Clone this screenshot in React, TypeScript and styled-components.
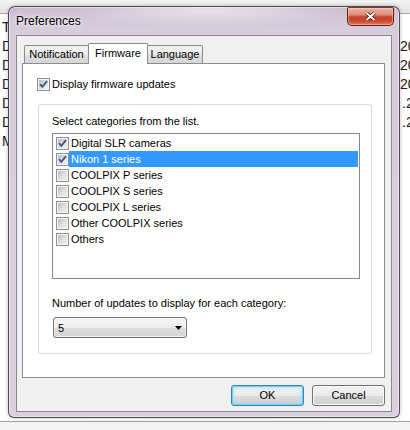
import React from 'react';
import styled, { createGlobalStyle } from 'styled-components';

const GlobalStyle = createGlobalStyle`
  html, body { margin: 0; padding: 0; background: #fff; }
  body { font-family: "Liberation Sans", Arial, sans-serif; }
  * { box-sizing: border-box; }
`;

const Screen = styled.div`
  position: relative;
  width: 410px;
  height: 430px;
  overflow: hidden;
  background: #fff;
  display: flex;
  flex-direction: column;
`;

const BgToolbar = styled.div`
  flex: none;
  height: 14px;
  background: linear-gradient(#f4f4f4, #e3e3e3);
  border-bottom: 1px solid #a7a7a7;
`;

const BgList = styled.div`
  flex: 1;
  padding-top: 3px;
  font: 14px "Liberation Sans", Arial, sans-serif;
  color: #1a1a1a;
`;

const BgRow = styled.div<{ $h: number }>`
  display: flex;
  height: ${(p) => p.$h}px;
  line-height: ${(p) => p.$h}px;
  white-space: nowrap;
`;

const BgLeft = styled.span`
  flex: 1;
  padding-left: 2px;
`;

const BgRight = styled.span<{ $shift: number }>`
  flex: none;
  width: 10px;
  overflow: hidden;
  padding-left: ${(p) => p.$shift}px;
`;

const BgStatus = styled.div`
  flex: none;
  height: 9px;
  border-top: 1px solid #a0a0a0;
  background: #f3f3f3;
`;

const Dialog = styled.div`
  position: absolute;
  left: 8px;
  top: 6px;
  width: 392px;
  height: 412px;
  display: flex;
  flex-direction: column;
  border: 1px solid rgba(45, 40, 48, 0.8);
  border-radius: 7px 7px 6px 6px;
  background:
    radial-gradient(ellipse 140px 16px at 200px 3px, rgba(255, 255, 255, 0.55), rgba(255, 255, 255, 0) 100%),
    linear-gradient(180deg, #c9bccd 0px, #d5c9d8 14px, #d9cedc 30px, #dad0dd 100%);
  box-shadow: inset 0 0 0 1px rgba(255, 255, 255, 0.45), 0 0 4px rgba(0, 0, 0, 0.25);
`;

const TitleBar = styled.div`
  flex: none;
  height: 28px;
  display: flex;
  align-items: flex-start;
  padding: 0 5px 0 7px;
`;

const Title = styled.div`
  font: 12px "Liberation Sans", Arial, sans-serif;
  line-height: 28px;
  color: #000;
  text-shadow: 0 0 6px rgba(255, 255, 255, 0.95), 0 0 3px rgba(255, 255, 255, 0.9);
`;

const CloseButton = styled.div`
  margin-left: auto;
  width: 47px;
  height: 19px;
  display: flex;
  align-items: center;
  justify-content: center;
  border: 1px solid #5e2018;
  border-top-color: #7a3a30;
  border-radius: 2px 2px 5px 5px;
  background: linear-gradient(
    180deg,
    #ebb3a6 0%,
    #dc8c7a 40%,
    #c5452c 52%,
    #c9472e 75%,
    #e4795c 100%
  );
  box-shadow: inset 0 0 0 1px rgba(255, 220, 210, 0.45);
`;

const Client = styled.div`
  flex: none;
  height: 377px;
  margin: 0 7px 5px 7px;
  border: 1px solid #8a8790;
  background: #f0f0f0;
  padding: 7px 6px 5px 5px;
  display: flex;
  flex-direction: column;
  font: 11px "Liberation Sans", Arial, sans-serif;
  color: #000;
`;

const TabStrip = styled.div`
  flex: none;
  height: 20px;
  display: flex;
  align-items: flex-end;
  padding-left: 2px;
`;

const Tab = styled.div<{ $active?: boolean; $w: number; $first?: boolean }>`
  position: relative;
  z-index: ${(p) => (p.$active ? 2 : 1)};
  width: ${(p) => p.$w}px;
  height: ${(p) => (p.$active ? 21 : 18)}px;
  margin-bottom: ${(p) => (p.$active ? -1 : 0)}px;
  margin-left: ${(p) => (p.$first ? 0 : -1)}px;
  border: 1px solid #898c95;
  border-bottom: none;
  border-radius: 2px 2px 0 0;
  background: ${(p) =>
    p.$active ? '#ffffff' : 'linear-gradient(180deg, #f3f3f3 0%, #ebebeb 50%, #dfdfdf 51%, #d6d6d6 100%)'};
  text-align: center;
  line-height: ${(p) => (p.$active ? 18 : 17)}px;
  white-space: nowrap;
`;

const Panel = styled.div`
  flex: none;
  height: 315px;
  border: 1px solid #898c95;
  background: #fff;
  padding: 14px 12px 0 14px;
  display: flex;
  flex-direction: column;
`;

const CheckRow = styled.label`
  display: flex;
  align-items: center;
  gap: 2px;
  height: 13px;
  line-height: 13px;
`;

const Box = styled.span`
  flex: none;
  width: 13px;
  height: 13px;
  border: 1px solid #8e8f8f;
  background: linear-gradient(135deg, #aeb2b8 0%, #dcdde0 50%, #f6f6f6 100%);
  box-shadow: inset 0 0 0 1px #f4f4f4;
  display: flex;
  align-items: center;
  justify-content: center;
`;

const GroupBox = styled.div`
  margin: 13px 0 0 1px;
  width: 334px;
  height: 250px;
  border: 1px solid #d5d8dc;
  border-radius: 3px;
  box-shadow: inset 0 0 0 1px #fdfdfd;
  padding: 10px 0 0 13px;
  display: flex;
  flex-direction: column;
`;

const Caption = styled.div<{ $gap?: number }>`
  height: 13px;
  line-height: 13px;
  margin-top: ${(p) => p.$gap ?? 0}px;
  white-space: nowrap;
`;

const ListBox = styled.div`
  margin-top: 5px;
  width: 308px;
  height: 146px;
  border: 1px solid #828790;
  background: #fff;
  padding: 1px 0 0 3px;
  display: flex;
  flex-direction: column;
`;

const ListItem = styled.div`
  height: 16px;
  display: flex;
  align-items: center;
`;

const ItemLabel = styled.span<{ $selected?: boolean }>`
  flex: 1;
  height: 16px;
  line-height: 16px;
  margin-right: 1px;
  padding-left: 2px;
  white-space: nowrap;
  color: ${(p) => (p.$selected ? '#fff' : '#000')};
  background: ${(p) => (p.$selected ? '#3399ff' : 'transparent')};
`;

const Combo = styled.div`
  margin: 7px 0 0 1px;
  width: 134px;
  height: 21px;
  border: 1px solid #707070;
  border-radius: 3px;
  background: linear-gradient(180deg, #f6f6f6 0%, #ececec 50%, #dedede 51%, #d3d3d3 100%);
  box-shadow: inset 0 0 0 1px rgba(255, 255, 255, 0.7);
  display: flex;
  align-items: center;
  justify-content: space-between;
  padding: 0 4px 0 4px;
`;

const ButtonRow = styled.div`
  flex: none;
  margin-top: 7px;
  display: flex;
  justify-content: flex-end;
  gap: 8px;
`;

const Button = styled.div<{ $default?: boolean }>`
  width: 73px;
  height: 21px;
  border: 1px solid ${(p) => (p.$default ? '#3c7fb1' : '#707070')};
  border-radius: 3px;
  background: linear-gradient(180deg, #f2f2f2 0%, #ebebeb 50%, #dddddd 51%, #cfcfcf 100%);
  box-shadow: ${(p) =>
    p.$default
      ? 'inset 0 0 0 1px #6fd3f5, inset 0 0 3px 2px rgba(150, 220, 245, 0.6)'
      : 'inset 0 0 0 1px #fbfbfb'};
  text-align: center;
  line-height: 19px;
`;

const Check: React.FC<{ checked?: boolean }> = ({ checked }) => (
  <Box>
    {checked && (
      <svg width="11" height="11" viewBox="0 0 11 11">
        <path d="M2 5.2 L4.3 7.8 L9 2.2" fill="none" stroke="#44578a" strokeWidth="1.9" />
      </svg>
    )}
  </Box>
);

const bgRows: { left: string; right: string; h: number; shift: number }[] = [
  { left: 'T', right: '', h: 20, shift: 0 },
  { left: 'D', right: '20', h: 19, shift: 0 },
  { left: 'D', right: '20', h: 19, shift: 0 },
  { left: 'D', right: '20', h: 19, shift: 0 },
  { left: 'D', right: '.2', h: 19, shift: 2 },
  { left: 'D', right: '.2', h: 19, shift: 2 },
  { left: 'M', right: '', h: 19, shift: 0 },
];

const items = [
  { label: 'Digital SLR cameras', checked: true },
  { label: 'Nikon 1 series', checked: true, selected: true },
  { label: 'COOLPIX P series' },
  { label: 'COOLPIX S series' },
  { label: 'COOLPIX L series' },
  { label: 'Other COOLPIX series' },
  { label: 'Others' },
];

export default function App() {
  return (
    <>
      <GlobalStyle />
      <Screen>
        <BgToolbar />
        <BgList>
          {bgRows.map((r, i) => (
            <BgRow key={i} $h={r.h}>
              <BgLeft>{r.left}</BgLeft>
              <BgRight $shift={r.shift}>{r.right}</BgRight>
            </BgRow>
          ))}
        </BgList>
        <BgStatus />

        <Dialog>
          <TitleBar>
            <Title>Preferences</Title>
            <CloseButton>
              <svg width="13" height="11" viewBox="0 0 13 11">
                <path d="M2.5 2 L10.5 9 M10.5 2 L2.5 9" stroke="#4a1a12" strokeWidth="3.6" />
                <path d="M2.5 2 L10.5 9 M10.5 2 L2.5 9" stroke="#ffffff" strokeWidth="1.9" />
              </svg>
            </CloseButton>
          </TitleBar>
          <Client>
            <TabStrip>
              <Tab $w={65} $first>Notification</Tab>
              <Tab $w={60} $active>Firmware</Tab>
              <Tab $w={56}>Language</Tab>
            </TabStrip>
            <Panel>
              <CheckRow>
                <Check checked />
                <span>Display firmware updates</span>
              </CheckRow>
              <GroupBox>
                <Caption>Select categories from the list.</Caption>
                <ListBox>
                  {items.map((it) => (
                    <ListItem key={it.label}>
                      <Check checked={it.checked} />
                      <ItemLabel $selected={it.selected}>{it.label}</ItemLabel>
                    </ListItem>
                  ))}
                </ListBox>
                <Caption $gap={18}>Number of updates to display for each category:</Caption>
                <Combo>
                  <span>5</span>
                  <svg width="7" height="4" viewBox="0 0 7 4">
                    <path d="M0 0 H7 L3.5 4 Z" fill="#000" />
                  </svg>
                </Combo>
              </GroupBox>
            </Panel>
            <ButtonRow>
              <Button $default>OK</Button>
              <Button>Cancel</Button>
            </ButtonRow>
          </Client>
        </Dialog>
      </Screen>
    </>
  );
}
